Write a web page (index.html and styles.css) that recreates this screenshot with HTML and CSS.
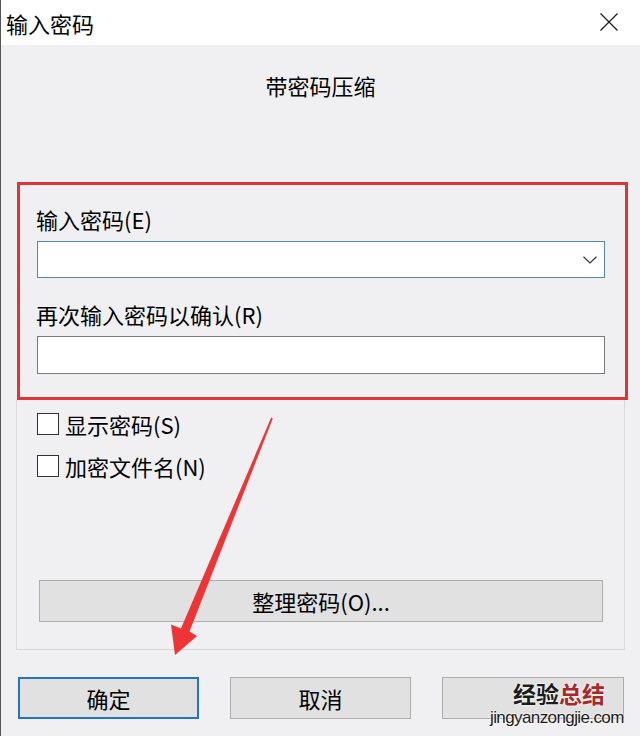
FILE: index.html
```html
<!DOCTYPE html>
<html lang="zh-CN">
<head>
<meta charset="utf-8">
<title>输入密码</title>
<link rel="stylesheet" href="styles.css">
</head>
<body>
<div class="window">
  <div class="titlebar">
    <span class="title">输入密码</span>
    <svg class="close" width="18" height="18" viewBox="0 0 18 18"><path d="M0.5 0.5 L17.5 17.5 M17.5 0.5 L0.5 17.5" stroke="#1a1a1a" stroke-width="1.2" fill="none"/></svg>
  </div>
  <div class="content">
    <div class="heading">带密码压缩</div>
    <div class="highlight">
      <div class="label">输入密码(E)</div>
      <div class="combo">
        <svg class="chev" width="14" height="8" viewBox="0 0 14 8"><path d="M0.5 0.8 L7 7 L13.5 0.8" stroke="#333" stroke-width="1.2" fill="none"/></svg>
      </div>
      <div class="label label2">再次输入密码以确认(R)</div>
      <div class="field"></div>
    </div>
    <div class="group">
      <div class="check"><span class="box"></span><span>显示密码(S)</span></div>
      <div class="check check2"><span class="box"></span><span>加密文件名(N)</span></div>
      <div class="btn wide">整理密码(O)...</div>
    </div>
    <div class="buttons">
      <div class="btn main">确定</div>
      <div class="btn">取消</div>
      <div class="btn"></div>
    </div>
  </div>
  <svg class="arrow" width="640" height="736" viewBox="0 0 640 736"><polygon points="271.2,417.6 272.8,418.4 189.5,631.5 197,636 175,655 171,624.5 181,628.5" fill="#ee3434"/></svg>
  <div class="watermark">
    <div class="wm-top"><span class="wm-black">经验</span><span class="wm-red">总结</span></div>
    <div class="wm-url">jingyanzongjie.com</div>
  </div>
</div>
</body>
</html>
```
FILE: styles.css
```css
html, body {
  margin: 0;
  padding: 0;
}
body {
  width: 640px;
  height: 736px;
  overflow: hidden;
  background: #f0f0f2;
  font-family: "Noto Sans CJK SC", "Noto Sans", sans-serif;
  color: #000;
}
.window {
  position: relative;
  width: 640px;
  height: 736px;
  box-sizing: border-box;
  border-left: 1px solid #555;
}
.titlebar {
  height: 45px;
  background: #fff;
  display: flex;
  align-items: center;
  justify-content: space-between;
  padding-left: 5px;
  padding-right: 22px;
}
.title {
  font-size: 22px;
  line-height: 30px;
}
.close {
  display: block;
  margin-top: -1px;
}
.heading {
  height: 112px;
  padding-top: 25px;
  font-size: 22px;
  line-height: 30px;
  text-align: center;
}
.highlight {
  margin-left: 16px;
  width: 611px;
  height: 218px;
  box-sizing: border-box;
  border: 3px solid #dd3538;
  padding: 19px 20px 23px 16px;
}
.label {
  font-size: 22px;
  line-height: 30px;
  margin-left: 0;
}
.label2 {
  margin-top: 21px;
}
.combo {
  margin-top: 7px;
  margin-left: 1px;
  height: 37px;
  box-sizing: border-box;
  background: #fff;
  border: 1px solid #4f87b0;
  display: flex;
  align-items: center;
  justify-content: flex-end;
  padding-right: 7px;
}
.chev {
  display: block;
}
.field {
  margin-top: 7px;
  margin-left: 1px;
  height: 38px;
  box-sizing: border-box;
  background: #fff;
  border: 1px solid #7a7a7a;
}
.group {
  margin-left: 15px;
  width: 609px;
  height: 250px;
  box-sizing: border-box;
  border: 1px solid #d9d9db;
  border-top: none;
  padding: 9px 20px 0 20px;
}
.check {
  display: flex;
  align-items: center;
  height: 30px;
  font-size: 22px;
  line-height: 30px;
}
.check2 {
  margin-top: 12px;
}
.box {
  width: 22px;
  height: 22px;
  box-sizing: border-box;
  border: 1px solid #333;
  background: #fff;
  margin-right: 6px;
  flex: none;
}
.btn {
  box-sizing: border-box;
  height: 42px;
  width: 181px;
  background: #e1e1e1;
  border: 1px solid #adadad;
  display: flex;
  align-items: center;
  justify-content: center;
  font-size: 22px;
}
.btn.wide {
  width: 564px;
  margin-top: 99px;
  margin-left: 2px;
}
.buttons {
  display: flex;
  gap: 31px;
  padding-left: 17px;
  margin-top: 27px;
}
.btn.main {
  border: 2px solid #1f74c4;
}
.buttons .btn:last-child {
  width: 182px;
}
.arrow {
  position: absolute;
  left: -1px;
  top: 0;
  pointer-events: none;
}
.watermark {
  position: absolute;
  left: 489px;
  top: 682px;
  text-shadow: 0 0 2px #fff, 0 0 2px #fff;
}
.wm-top {
  padding-left: 23px;
  font-size: 23px;
  line-height: 23px;
  font-weight: bold;
}
.wm-black {
  color: #1c1c1c;
}
.wm-red {
  color: #a8282a;
}
.wm-url {
  margin-top: 4px;
  font-family: "Liberation Sans", sans-serif;
  font-size: 17px;
  line-height: 17px;
  letter-spacing: -0.6px;
  color: #1a1a1a;
}
```
